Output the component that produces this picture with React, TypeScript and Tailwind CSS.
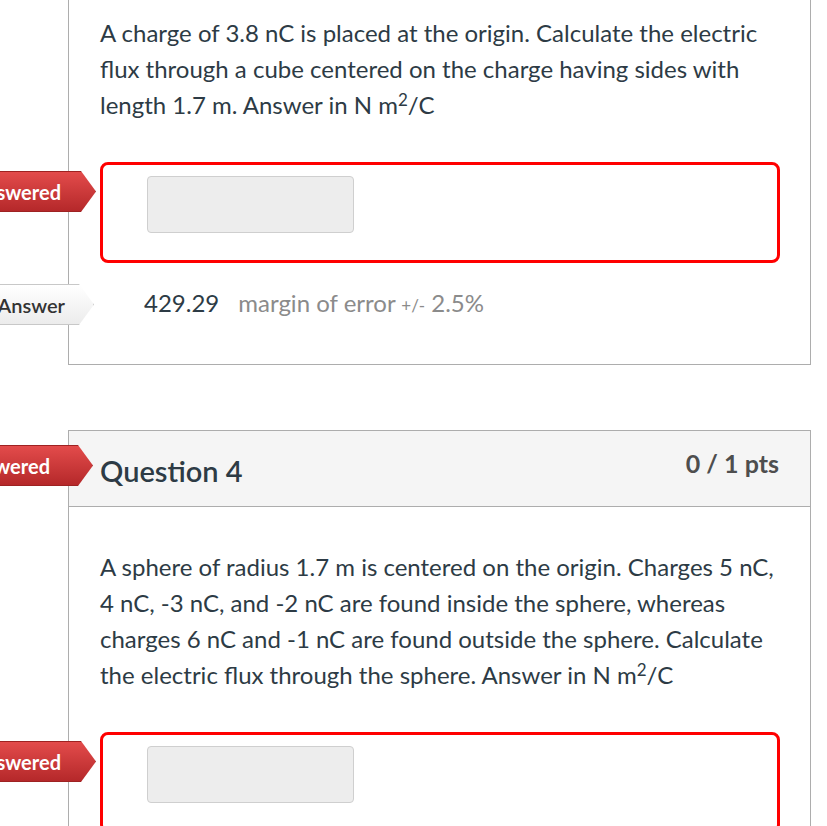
import React from "react";

type TagProps = {
  label: string;
  className: string;
  light?: boolean;
};

// left-side status flags, mostly cut off by the window edge
function Tag({ label, className, light }: TagProps) {
  return (
    <div
      className={`absolute w-[240px] h-[41px] [clip-path:polygon(0_0,calc(100%-15px)_0,100%_50%,calc(100%-15px)_100%,0_100%)] flex items-center justify-end text-[20px] font-bold ${
        light
          ? "bg-gradient-to-b from-[#ffffff] to-[#ececec] text-[#333] border border-[#c8c8c8]"
          : "bg-gradient-to-b from-[#e34b4b] to-[#b5282a] text-white border border-[#9e2222]"
      } ${className}`}
    >
      {label}
    </div>
  );
}

function AnswerBox() {
  return (
    <div className="mt-[39px] ml-[31px] mr-[30px] h-[101px] border-[3px] border-[#ff0000] rounded-[8px] pl-[44px] pt-[11px]">
      <div className="w-[207px] h-[57px] bg-[#ededed] border border-[#cfcfcf] rounded-[4px]" />
    </div>
  );
}

export default function App() {
  return (
    <div className="min-h-screen bg-white font-['Lato','Noto_Sans',sans-serif] text-[#2d3b45] pl-[68px] pr-[16px] overflow-hidden">
      {/* question 3, top part scrolled off */}
      <div className="relative border-x border-b border-[#adadad] pt-[15px] pb-[43px]">
        <p className="pl-[31px] pr-[20px] text-[24px] leading-[36px]">
          A charge of 3.8 nC is placed at the origin. Calculate the electric
          flux through a cube centered on the charge having sides with length
          1.7 m. Answer in N m<sup className="text-[17px] leading-none">2</sup>/C
        </p>

        <div className="relative">
          <Tag label="Unanswered" className="top-[9px] right-[calc(100%-27px)] pr-[34px]" />
          <AnswerBox />
        </div>

        <div className="relative mt-[22px] flex items-center h-[36px] pl-[75px] text-[24px]">
          <Tag label="Correct Answer" light className="top-[-1px] right-[calc(100%-25px)] pr-[28px] !font-semibold" />
          <span className="text-[#2d3b45]">429.29</span>
          <span className="ml-[19px] text-[#8b8b8b]">
            margin of error <span className="text-[17px]">+/-</span> 2.5%
          </span>
        </div>
      </div>

      {/* question 4 */}
      <div className="relative mt-[65px] border border-[#adadad]">
        <Tag label="Unanswered" className="top-[14px] right-[calc(100%-24px)] pr-[42px]" />
        <div className="h-[76px] bg-[#f5f5f5] border-b border-[#adadad] flex items-center justify-between pl-[31px] pr-[31px]">
          <h2 className="text-[29px] font-semibold text-[#2d3b45] mt-[4px]">Question 4</h2>
          <span className="text-[25px] font-bold text-[#4e4e4e] -mt-[9px]">0 / 1 pts</span>
        </div>
        <div className="pt-[42px] pb-[40px]">
          <p className="pl-[31px] pr-[20px] text-[24px] leading-[36px]">
            A sphere of radius 1.7 m is centered on the origin. Charges 5 nC, 4
            nC, -3 nC, and -2 nC are found inside the sphere, whereas charges 6
            nC and -1 nC are found outside the sphere. Calculate the electric
            flux through the sphere. Answer in N m
            <sup className="text-[17px] leading-none">2</sup>/C
          </p>
          <div className="relative">
            <Tag label="Unanswered" className="top-[9px] right-[calc(100%-27px)] pr-[34px]" />
            <AnswerBox />
          </div>
        </div>
      </div>
    </div>
  );
}
